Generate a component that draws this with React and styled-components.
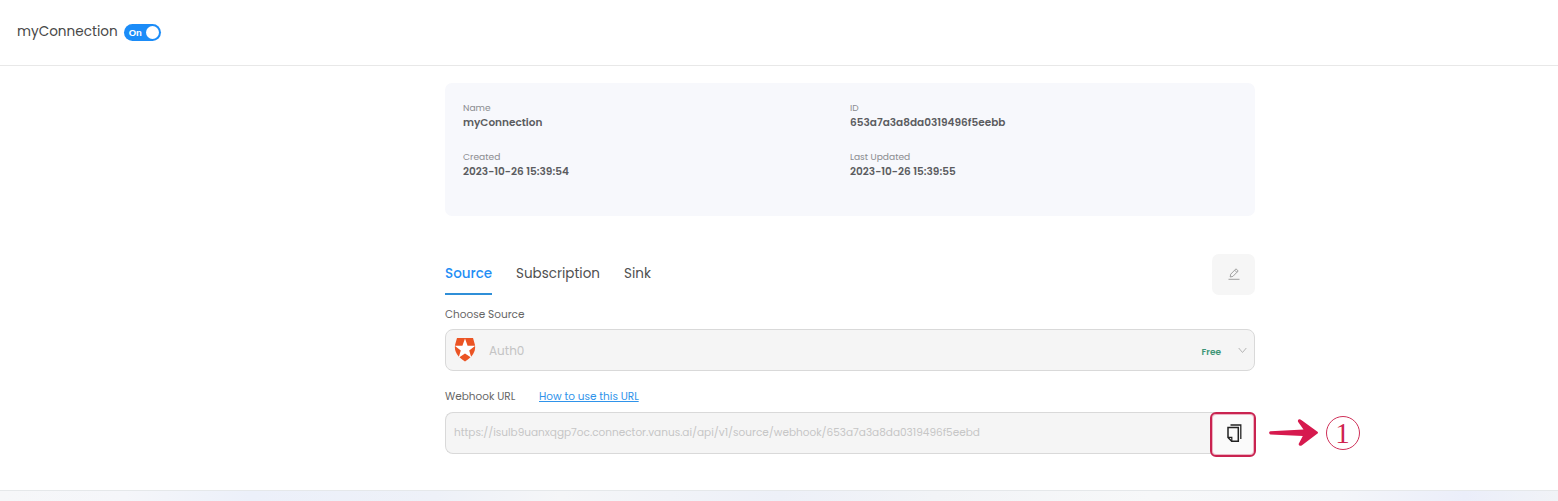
import React from "react";
import styled, { createGlobalStyle } from "styled-components";

const GlobalStyle = createGlobalStyle`
  * { box-sizing: border-box; }
  body {
    margin: 0;
    background: #fff;
    color: #4c4c4c;
    font-family: Poppins, Inter, "Liberation Sans", sans-serif;
    overflow: hidden;
  }
`;

const Page = styled.div`
  height: 501px;
  display: flex;
  flex-direction: column;
`;

const Text = styled.span`
  font-size: ${(p) => p.$size}px;
  line-height: ${(p) => p.$line || 16}px;
  font-weight: ${(p) => p.$weight || 400};
  color: ${(p) => p.$color || "#505050"};
  text-decoration: ${(p) => (p.$underline ? "underline" : "none")};
  white-space: nowrap;
`;

const Header = styled.header`
  height: 66px;
  flex: none;
  display: flex;
  align-items: flex-start;
  gap: 6px;
  padding: 22px 17px 0;
  border-bottom: 1px solid #e8e8e8;
`;

const Toggle = styled.button`
  width: 37px;
  height: 17px;
  margin: 2px 0 0;
  border: 0;
  border-radius: 9px;
  padding: 0 2px 0 5px;
  display: flex;
  align-items: center;
  justify-content: space-between;
  background: #1b8cf8;
`;

const Knob = styled.i`
  width: 13px;
  height: 13px;
  border-radius: 50%;
  background: #fff;
`;

const Main = styled.main`
  flex: 1;
  width: 810px;
  margin-left: 445px;
  padding-top: 17px;
`;

const Summary = styled.section`
  height: 133px;
  padding: 18px 18px;
  border-radius: 7px;
  background: #f7f8fc;
  display: grid;
  grid-template-columns: 1fr 1fr;
  grid-auto-rows: 49px;
`;

const Field = styled.div`
  display: flex;
  flex-direction: column;
`;

const TabBar = styled.nav`
  display: flex;
  align-items: flex-start;
  gap: 24px;
  height: 42px;
  margin-top: 37px;
`;

const Tab = styled.div`
  height: 42px;
  width: ${(p) => p.$width}px;
  display: flex;
  align-items: center;
  padding-top: 1px;
  border-bottom: 2px solid ${(p) => (p.$active ? "#2f8fd8" : "transparent")};
`;

const EditButton = styled.button`
  width: 43px;
  height: 41px;
  margin: 1px 0 0 auto;
  padding: 0 0 2px;
  border: 0;
  border-radius: 7px;
  background: #f6f6f6;
  display: flex;
  align-items: center;
  justify-content: center;
`;

const LabelRow = styled.div`
  display: flex;
  height: 16px;
  margin: ${(p) => p.$top}px 0 ${(p) => p.$bottom}px;
`;

const Label = styled.div`
  width: 94px;
  display: flex;
`;

const Control = styled.div`
  height: 42px;
  width: 810px;
  display: flex;
  align-items: center;
  border: 1px solid #d9d9d9;
  border-radius: 8px;
  background: #f5f5f5;
  padding: 0 7px 0 8px;
`;

const SourceName = styled.div`
  margin: 1px 0 0 13px;
  flex: 1;
  display: flex;
`;

const Price = styled.div`
  margin: 3px 17px 0 0;
  display: flex;
`;

const WebhookRow = styled.div`
  display: flex;
  width: 920px;
  height: 45px;
`;

const UrlBox = styled(Control)`
  width: 770px;
  flex: none;
  border-right: 0;
  border-radius: 8px 0 0 8px;
`;

const CopyButton = styled.button`
  width: 46px;
  height: 45px;
  flex: none;
  margin: 0 0 0 -5px;
  padding: 0 0 3px 2px;
  border: 2px solid #c92350;
  box-shadow: inset 0 0 0 1px #edb3c3;
  border-radius: 6px;
  background: #fafafa;
  display: flex;
  align-items: center;
  justify-content: center;
`;

const Arrow = styled.svg`
  width: 50px;
  height: 28px;
  margin: 7px 7px 0 13px;
`;

const Step = styled.span`
  width: 34px;
  height: 34px;
  margin-top: 4px;
  border: 1px solid #cf3159;
  border-radius: 50%;
  display: flex;
  align-items: center;
  justify-content: center;
  color: #cf244f;
  padding-right: 1px;
  font: 29px/32px "Liberation Serif", serif;
`;

const Footer = styled.footer`
  height: 11px;
  flex: none;
  border-top: 1px solid #e5e8ea;
  background: linear-gradient(90deg, #f6f7f9 0%, #f5f6fa 8%, #ecf0fa 16%, #eef1f8 28%, #f5f6f8 36%, #edf0f8 50%, #f2f4f7 60%, #f7f8f9 74%, #f4f6fa 86%, #ebeefa 94%, #f1f3f7 100%);
`;

const summary = [
  { label: "Name", value: "myConnection" },
  { label: "ID", value: "653a7a3a8da0319496f5eebb" },
  { label: "Created", value: "2023-10-26 15:39:54" },
  { label: "Last Updated", value: "2023-10-26 15:39:55" },
];

function Auth0Logo() {
  return (
    <svg width="22" height="24" viewBox="0 0 22 24">
      <path d="M3 0h16l2 7c1 7-3 12-10 16.500C4 19 0 14 1 7Z" fill="#eb5424" />
      <path d="m11 .5 2.600 7.300h7.700l-6.100 4.700 2.200 7.200L11 15.400l-6.400 4.300 2.200-7.200L.7 7.800h7.700Z" fill="#fff" />
    </svg>
  );
}

function PencilIcon() {
  return (
    <svg width="12" height="12" viewBox="0 0 12 12" fill="none" stroke="#a0a0a0" strokeWidth="1">
      <path d="m2.200 9 .5-2.800L8 .8l2.200 2.200-5.300 5.400ZM6.700 2.200l2.100 2.100M.5 11.300h11" />
    </svg>
  );
}

function CopyIcon() {
  return (
    <svg width="15" height="18" viewBox="0 0 15 18" fill="none" stroke="#222" strokeWidth="1.500">
      <path d="M3.500 1h10.300v14" strokeWidth="1.300" />
      <path d="M1 3.500h10.300v13.700H4.700L1 13.500Z" />
      <path d="M1 13.300h3.800v3.900" strokeWidth="1.200" />
    </svg>
  );
}

export default function App() {
  return (
    <Page>
      <GlobalStyle />
      <Header>
        <Text $size={13.6} $line={20} $color="#484848">myConnection</Text>
        <Toggle>
          <Text $size={9.5} $line={15} $weight={600} $color="#fff">On</Text>
          <Knob />
        </Toggle>
      </Header>
      <Main>
        <Summary>
          {summary.map((f) => (
            <Field key={f.label}>
              <Text $size={9.1} $line={14} $color="#8b8c90">{f.label}</Text>
              <Text $size={10.5} $line={15} $weight={600} $color="#5b5c60">{f.value}</Text>
            </Field>
          ))}
        </Summary>
        <TabBar>
          <Tab $width={47} $active><Text $size={13.5} $weight={500} $color="#1f8ef5">Source</Text></Tab>
          <Tab $width={84}><Text $size={13.5}>Subscription</Text></Tab>
          <Tab $width={28}><Text $size={13.5}>Sink</Text></Tab>
          <EditButton><PencilIcon /></EditButton>
        </TabBar>
        <LabelRow $top={12} $bottom={6}><Text $size={10.5} $color="#666">Choose Source</Text></LabelRow>
        <Control>
          <Auth0Logo />
          <SourceName><Text $size={12} $color="#c4c4c4">Auth0</Text></SourceName>
          <Price><Text $size={9} $weight={600} $color="#3e9577">Free</Text></Price>
          <svg width="9" height="7" viewBox="0 0 9 7" fill="none" stroke="#b5b5b5"><path d="m.7 1 3.800 4.500L8.300 1" /></svg>
        </Control>
        <LabelRow $top={18} $bottom={7}>
          <Label><Text $size={10.5} $color="#666">Webhook URL</Text></Label>
          <Text $size={10.5} $color="#2f93ea" $underline>How to use this URL</Text>
        </LabelRow>
        <WebhookRow>
          <UrlBox>
            <Text $size={10.5} $color="#c6c6c6">
              https://isulb9uanxqgp7oc.connector.vanus.ai/api/v1/source/webhook/653a7a3a8da0319496f5eebd
            </Text>
          </UrlBox>
          <CopyButton><CopyIcon /></CopyButton>
          <Arrow viewBox="0 0 50 28">
            <path d="M1.500 12.200 34.500 10.500 29.200 3C28 .8 30.500-.6 32.300 1L48.500 12.800Q49.500 13.700 48.500 14.600L33 26.300C31 27.600 28.800 26.300 30 24.200L33.800 17 1.500 15.400C-.3 15.200-.3 12.400 1.500 12.200Z" fill="#d61a4e" />
          </Arrow>
          <Step>1</Step>
        </WebhookRow>
      </Main>
      <Footer />
    </Page>
  );
}
